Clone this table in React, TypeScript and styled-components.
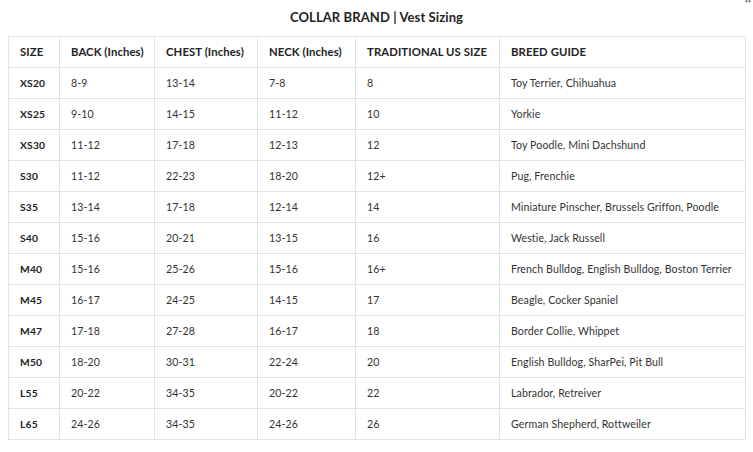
import React from "react";
import styled, { createGlobalStyle } from "styled-components";

const Global = createGlobalStyle`
  html, body { margin: 0; padding: 0; background: #ffffff; }
  body { font-family: "Lato", "Noto Sans", sans-serif; color: #333; }
`;

const Page = styled.div`
  position: relative;
  width: 753px;
  height: 452px;
  padding: 0 8px;
  box-sizing: border-box;
  overflow: hidden;
`;

const Title = styled.h2`
  margin: 0;
  padding-top: 9px;
  height: 28px;
  box-sizing: border-box;
  line-height: 16px;
  font-size: 13px;
  font-weight: 700;
  text-align: center;
  color: #222;
  letter-spacing: 0.1px;
  margin-bottom: 8px;
`;

const Corner = styled.span`
  position: absolute;
  top: 0;
  right: 2px;
  font-size: 7px;
  font-weight: 700;
  color: #333;
  line-height: 7px;
`;

const Table = styled.table`
  width: 737px;
  border-collapse: collapse;
  table-layout: fixed;
`;

const Col = styled.col<{ $w: number }>`
  width: ${(p) => p.$w}px;
`;

const Row = styled.tr`
  height: 31px;
`;

const HeadCell = styled.th`
  border: 1px solid #e4e4e4;
  padding: 0 0 1px 11px;
  text-align: left;
  font-size: 11.3px;
  font-weight: 700;
  color: #222;
  white-space: nowrap;
  letter-spacing: 0.1px;
`;

const Cell = styled.td<{ $strong?: boolean }>`
  border: 1px solid #e4e4e4;
  padding: 0 0 0 11px;
  font-size: ${(p) => (p.$strong ? "10.3px" : "10.6px")};
  font-weight: ${(p) => (p.$strong ? 700 : 400)};
  color: ${(p) => (p.$strong ? "#222" : "#333")};
  white-space: nowrap;
  letter-spacing: ${(p) => (p.$strong ? "0.2px" : "0.1px")};
`;

const headers = [
  "SIZE",
  "BACK (Inches)",
  "CHEST (Inches)",
  "NECK (Inches)",
  "TRADITIONAL US SIZE",
  "BREED GUIDE",
];

const widths = [51, 95, 103, 98, 144, 246];

const rows: string[][] = [
  ["XS20", "8-9", "13-14", "7-8", "8", "Toy Terrier, Chihuahua"],
  ["XS25", "9-10", "14-15", "11-12", "10", "Yorkie"],
  ["XS30", "11-12", "17-18", "12-13", "12", "Toy Poodle, Mini Dachshund"],
  ["S30", "11-12", "22-23", "18-20", "12+", "Pug, Frenchie"],
  ["S35", "13-14", "17-18", "12-14", "14", "Miniature Pinscher, Brussels Griffon, Poodle"],
  ["S40", "15-16", "20-21", "13-15", "16", "Westie, Jack Russell"],
  ["M40", "15-16", "25-26", "15-16", "16+", "French Bulldog, English Bulldog, Boston Terrier"],
  ["M45", "16-17", "24-25", "14-15", "17", "Beagle, Cocker Spaniel"],
  ["M47", "17-18", "27-28", "16-17", "18", "Border Collie, Whippet"],
  ["M50", "18-20", "30-31", "22-24", "20", "English Bulldog, SharPei, Pit Bull"],
  ["L55", "20-22", "34-35", "20-22", "22", "Labrador, Retreiver"],
  ["L65", "24-26", "34-35", "24-26", "26", "German Shepherd, Rottweiler"],
];

export default function App() {
  return (
    <Page>
      <Global />
      <Corner>**</Corner>
      <Title>COLLAR BRAND | Vest Sizing</Title>
      <Table>
        <colgroup>
          {widths.map((w, i) => (
            <Col key={i} $w={w} />
          ))}
        </colgroup>
        <thead>
          <Row>
            {headers.map((h) => (
              <HeadCell key={h}>{h}</HeadCell>
            ))}
          </Row>
        </thead>
        <tbody>
          {rows.map((r) => (
            <Row key={r[0]}>
              {r.map((c, i) => (
                <Cell key={i} $strong={i === 0}>
                  {c}
                </Cell>
              ))}
            </Row>
          ))}
        </tbody>
      </Table>
    </Page>
  );
}
